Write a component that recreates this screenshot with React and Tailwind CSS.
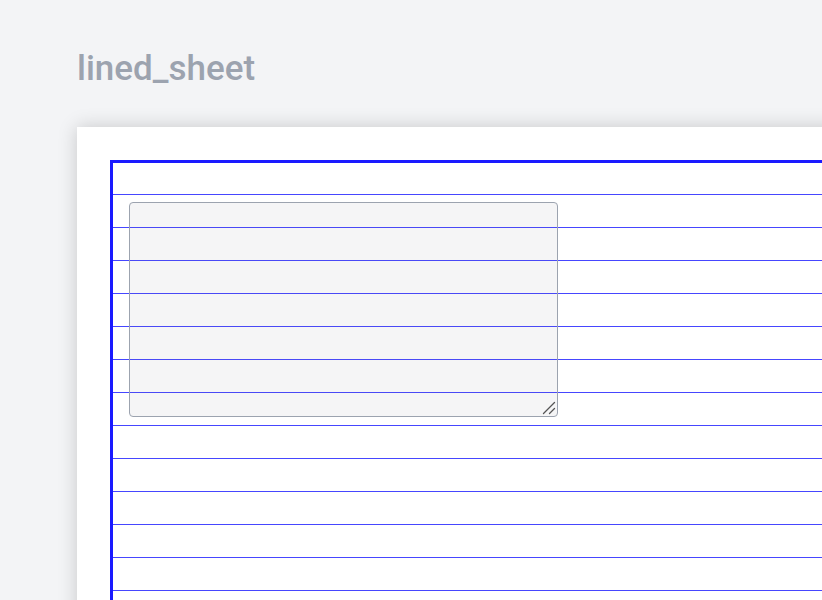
import React from 'react';

const App = () => {
  return (
    <div className="min-h-screen h-[600px] overflow-hidden bg-[#f3f4f6] pl-[77px] pt-[49px]" style={{ fontFamily: 'Roboto, "Noto Sans", sans-serif' }}>
      <h1 className="text-[35px] leading-10 font-medium text-[#9ca3af]">lined_sheet</h1>

      <div className="mt-[38px] w-[900px] bg-white p-[33px] shadow-[0_0_18px_rgba(0,0,0,0.18)]">
        <div className="h-[700px] border-l-[3px] border-t-[3px] border-[#1a1aff] bg-[repeating-linear-gradient(to_bottom,transparent_0px,transparent_31px,#4646ff_31px,#4646ff_32px,transparent_32px,transparent_33px)] pl-4 pt-[39px]">
          <div className="relative h-[215px] w-[429px]">
            <textarea
              className="block h-full w-full resize-none rounded border border-[#9ca3af] bg-[rgba(107,114,128,0.07)] outline-none"
              defaultValue=""
            />
            {/* resize grip */}
            <svg className="pointer-events-none absolute bottom-[2px] right-[2px]" width="14" height="14" viewBox="0 0 14 14">
              <path d="M1.5 12.5 L12.5 1.5" stroke="#555" strokeWidth="1.3" strokeLinecap="round" />
              <path d="M7.5 12.5 L12.5 7.5" stroke="#555" strokeWidth="1.3" strokeLinecap="round" />
            </svg>
          </div>
        </div>
      </div>
    </div>
  );
};

export default App;
